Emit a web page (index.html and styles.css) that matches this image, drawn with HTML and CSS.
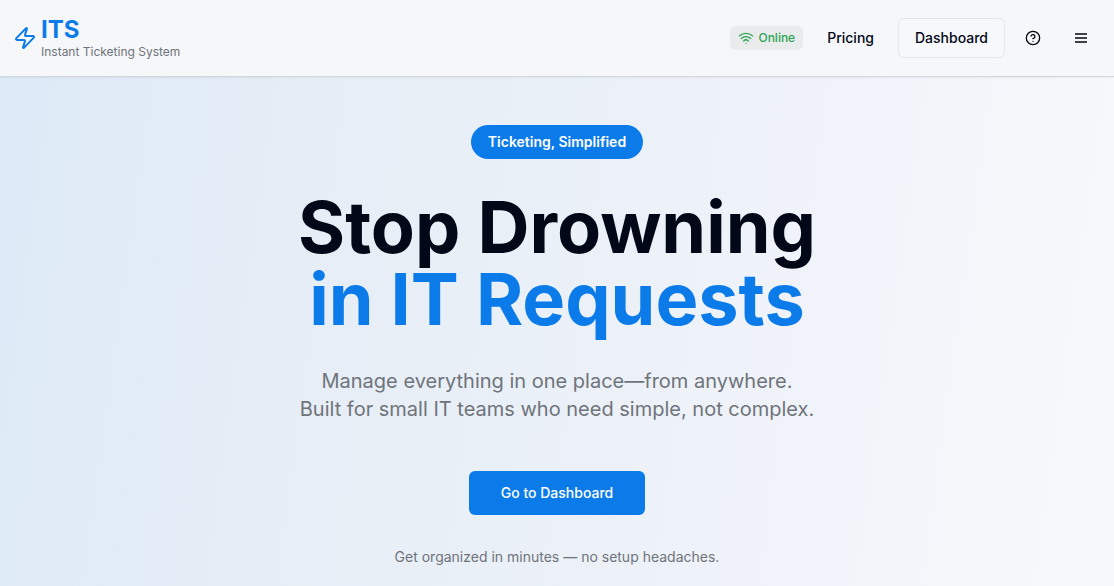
FILE: index.html
```html
<!DOCTYPE html>
<html lang="en">
<head>
<meta charset="utf-8">
<meta name="viewport" content="width=device-width, initial-scale=1">
<title>ITS – Instant Ticketing System</title>
<link rel="stylesheet" href="styles.css">
</head>
<body>
<header class="header">
  <a class="brand" href="#">
    <svg class="brand-icon" viewBox="0 0 24 24" aria-hidden="true"><path d="M4 14a1 1 0 0 1-.78-1.63l9.9-10.2a.5.5 0 0 1 .86.46l-1.92 6.02A1 1 0 0 0 13 10h7a1 1 0 0 1 .78 1.63l-9.9 10.2a.5.5 0 0 1-.86-.46l1.92-6.02A1 1 0 0 0 11 14z"/></svg>
    <span class="brand-text">
      <span class="brand-name">ITS</span>
      <span class="brand-tagline">Instant Ticketing System</span>
    </span>
  </a>
  <nav class="nav" aria-label="Main">
    <span class="status">
      <svg class="icon" viewBox="0 0 24 24" aria-hidden="true"><path d="M12 20h.01M2 8.82a15 15 0 0 1 20 0M5 12.859a10 10 0 0 1 14 0M8.5 16.429a5 5 0 0 1 7 0"/></svg>
      Online
    </span>
    <a class="nav-link" href="#">Pricing</a>
    <a class="nav-link nav-link-outline" href="#">Dashboard</a>
    <button class="icon-button" type="button" aria-label="Help">
      <svg class="icon" viewBox="0 0 24 24" aria-hidden="true"><circle cx="12" cy="12" r="10"/><path d="M9.09 9a3 3 0 0 1 5.83 1c0 2-3 3-3 3M12 17h.01"/></svg>
    </button>
    <button class="icon-button" type="button" aria-label="Menu">
      <svg class="icon icon-menu" viewBox="0 0 16 16" aria-hidden="true"><path d="M2 4h12M2 8h12M2 12h12"/></svg>
    </button>
  </nav>
</header>
<main class="hero">
  <span class="pill">Ticketing, Simplified</span>
  <h1 class="title">Stop Drowning<span class="title-accent">in IT Requests</span></h1>
  <p class="lead">Manage everything in one place—from anywhere.<br>Built for small IT teams who need simple, not complex.</p>
  <a class="cta" href="#">Go to Dashboard</a>
  <p class="note">Get organized in minutes — no setup headaches.</p>
</main>
</body>
</html>
```
FILE: styles.css
```css
:root {
  --primary: #0c7bea;
  --ink: #020817;
  --muted: #6f747b;
}

* {
  box-sizing: border-box;
}

body {
  display: flex;
  flex-direction: column;
  min-height: 100vh;
  margin: 0;
  color: var(--ink);
  font: 14px/20px Inter, sans-serif;
}

a {
  color: inherit;
  text-decoration: none;
}

svg {
  flex: none;
  fill: none;
  stroke: currentColor;
  stroke-width: 2;
  stroke-linecap: round;
  stroke-linejoin: round;
}

.header {
  display: flex;
  align-items: center;
  justify-content: space-between;
  padding: 16px 13px;
  background: #f6f7f9;
  border-bottom: 1px solid #d3d6da;
  box-shadow: 0 1px 2px rgb(0 0 0 / 5%);
  z-index: 1;
}

.brand {
  display: flex;
  align-items: center;
  gap: 4px;
}

.brand-icon {
  width: 24px;
  height: 24px;
  color: var(--primary);
}

.brand-text {
  display: flex;
  flex-direction: column;
}

.brand-name {
  color: var(--primary);
  font-size: 24px;
  font-weight: 700;
  line-height: 28px;
}

.brand-tagline {
  color: var(--muted);
  font-size: 12px;
  line-height: 16px;
}

.nav {
  display: flex;
  align-items: center;
  gap: 8px;
}

.icon {
  width: 16px;
  height: 16px;
}

.icon-menu {
  color: #3d4149;
  stroke-linecap: butt;
}

.status {
  display: flex;
  align-items: center;
  gap: 4px;
  padding: 4px 8px;
  border-radius: 6px;
  background: #e9ebed;
  color: #2ba653;
  font-size: 12px;
  font-weight: 500;
  line-height: 16px;
}

.nav-link {
  padding: 10px 16px;
  border-radius: 6px;
  font-weight: 500;
}

.nav-link-outline {
  padding: 9px 16px;
  border: 1px solid #e4e7eb;
  background: #f7f8fa;
}

.icon-button {
  display: grid;
  place-items: center;
  width: 40px;
  height: 40px;
  padding: 0;
  border: 0;
  background: none;
  color: var(--ink);
}

.hero {
  display: flex;
  flex: 1;
  flex-direction: column;
  align-items: center;
  padding: 48px 16px 19px;
  background: linear-gradient(98deg, #ddeaf7 0%, #e5edf6 25%, #ecf1f8 55%, #f1f4fa 76%, #f7f8fa 96%);
  text-align: center;
}

.pill {
  padding: 7px 17px;
  border-radius: 17px;
  background: var(--primary);
  color: #fff;
  font-weight: 600;
}

.title {
  margin: 32px 0;
  font-size: 72px;
  font-weight: 700;
  line-height: 72px;
}

.title-accent {
  display: block;
  color: var(--primary);
}

.lead {
  margin: 0 0 48px;
  color: var(--muted);
  font-size: 20px;
  line-height: 28px;
}

.cta {
  padding: 12px 32px;
  border-radius: 6px;
  background: var(--primary);
  color: #fff;
  font-weight: 500;
}

.note {
  margin: 32px 0 0;
  color: var(--muted);
}
```
